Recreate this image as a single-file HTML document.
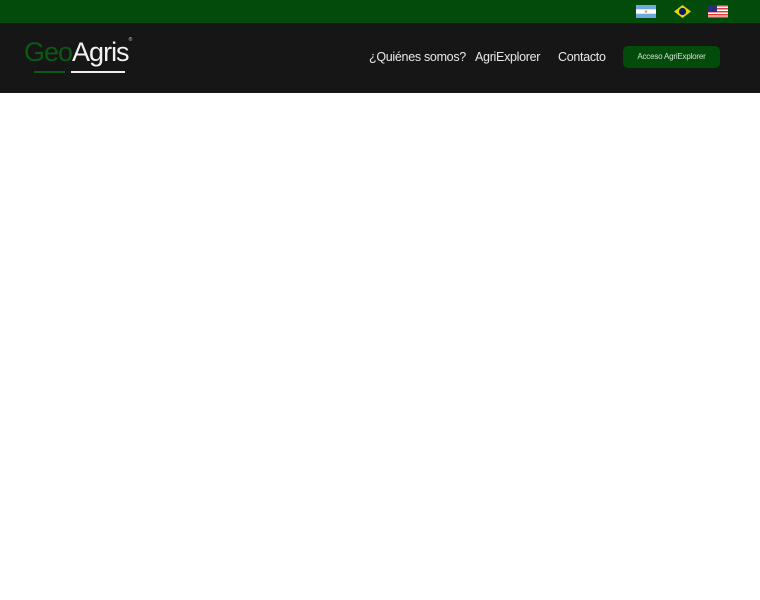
<!DOCTYPE html>
<html><head><style>
body{margin:0;width:760px;height:600px;background:#fff;font-family:"Liberation Sans",sans-serif;position:relative;overflow:hidden}
.top{position:absolute;left:0;top:0;width:760px;height:23px;background:#024b0b}
.nav{position:absolute;left:0;top:23px;width:760px;height:70px;background:#161616}
.logo{position:absolute;left:24px;top:14px;font-size:27px;letter-spacing:-1px}
.l1{position:absolute;left:34px;top:71px;width:31px;height:2px;background:#0a5a14}
.l2{position:absolute;left:71px;top:71px;width:54px;height:2px;background:#eee}
.m{position:absolute;top:27px;color:#e8e8e8;font-size:12.5px;white-space:nowrap}
.btn{position:absolute;left:623px;top:23px;width:97px;height:22px;background:#024b0b;border-radius:5px;color:#cfe0cf;font-size:8px;text-align:center;line-height:22px}
</style></head><body>
<div class="top">
<svg style="position:absolute;left:636px;top:5px" width="20" height="13"><rect width="20" height="13" fill="#6fa8dc"/><rect y="4.3" width="20" height="4.4" fill="#fff"/><circle cx="10" cy="6.5" r="1.3" fill="#d9a441"/></svg>
<svg style="position:absolute;left:674px;top:5px" width="17" height="13"><polygon points="0,6.5 8.5,0 17,6.5 8.5,13" fill="#e6d600"/><circle cx="8.5" cy="6.5" r="3.6" fill="#0c1a6b"/></svg>
<svg style="position:absolute;left:708px;top:5px" width="20" height="13"><rect width="20" height="13" fill="#fff"/><g fill="#e03a3a"><rect y="0" width="20" height="1.5"/><rect y="3" width="20" height="1.5"/><rect y="6" width="20" height="1.5"/><rect y="9" width="20" height="1.5"/><rect y="11.5" width="20" height="1.5"/></g><rect width="9" height="7" fill="#2a2f7a"/></svg>
</div>
<div class="nav">
<div class="logo"><span style="color:#0a5a14">Geo</span><span style="color:#f2f2f2">Agris</span><sup style="color:#ccc;font-size:5px;vertical-align:top">®</sup></div>
<div class="m" style="left:369px;letter-spacing:-0.3px">¿Quiénes somos?</div>
<div class="m" style="left:475px;letter-spacing:-0.3px">AgriExplorer</div>
<div class="m" style="left:558px;letter-spacing:-0.3px">Contacto</div>
<div class="btn" style="letter-spacing:-0.2px">Acceso AgriExplorer</div>
</div>
<div class="l1"></div><div class="l2"></div>
</body></html>
